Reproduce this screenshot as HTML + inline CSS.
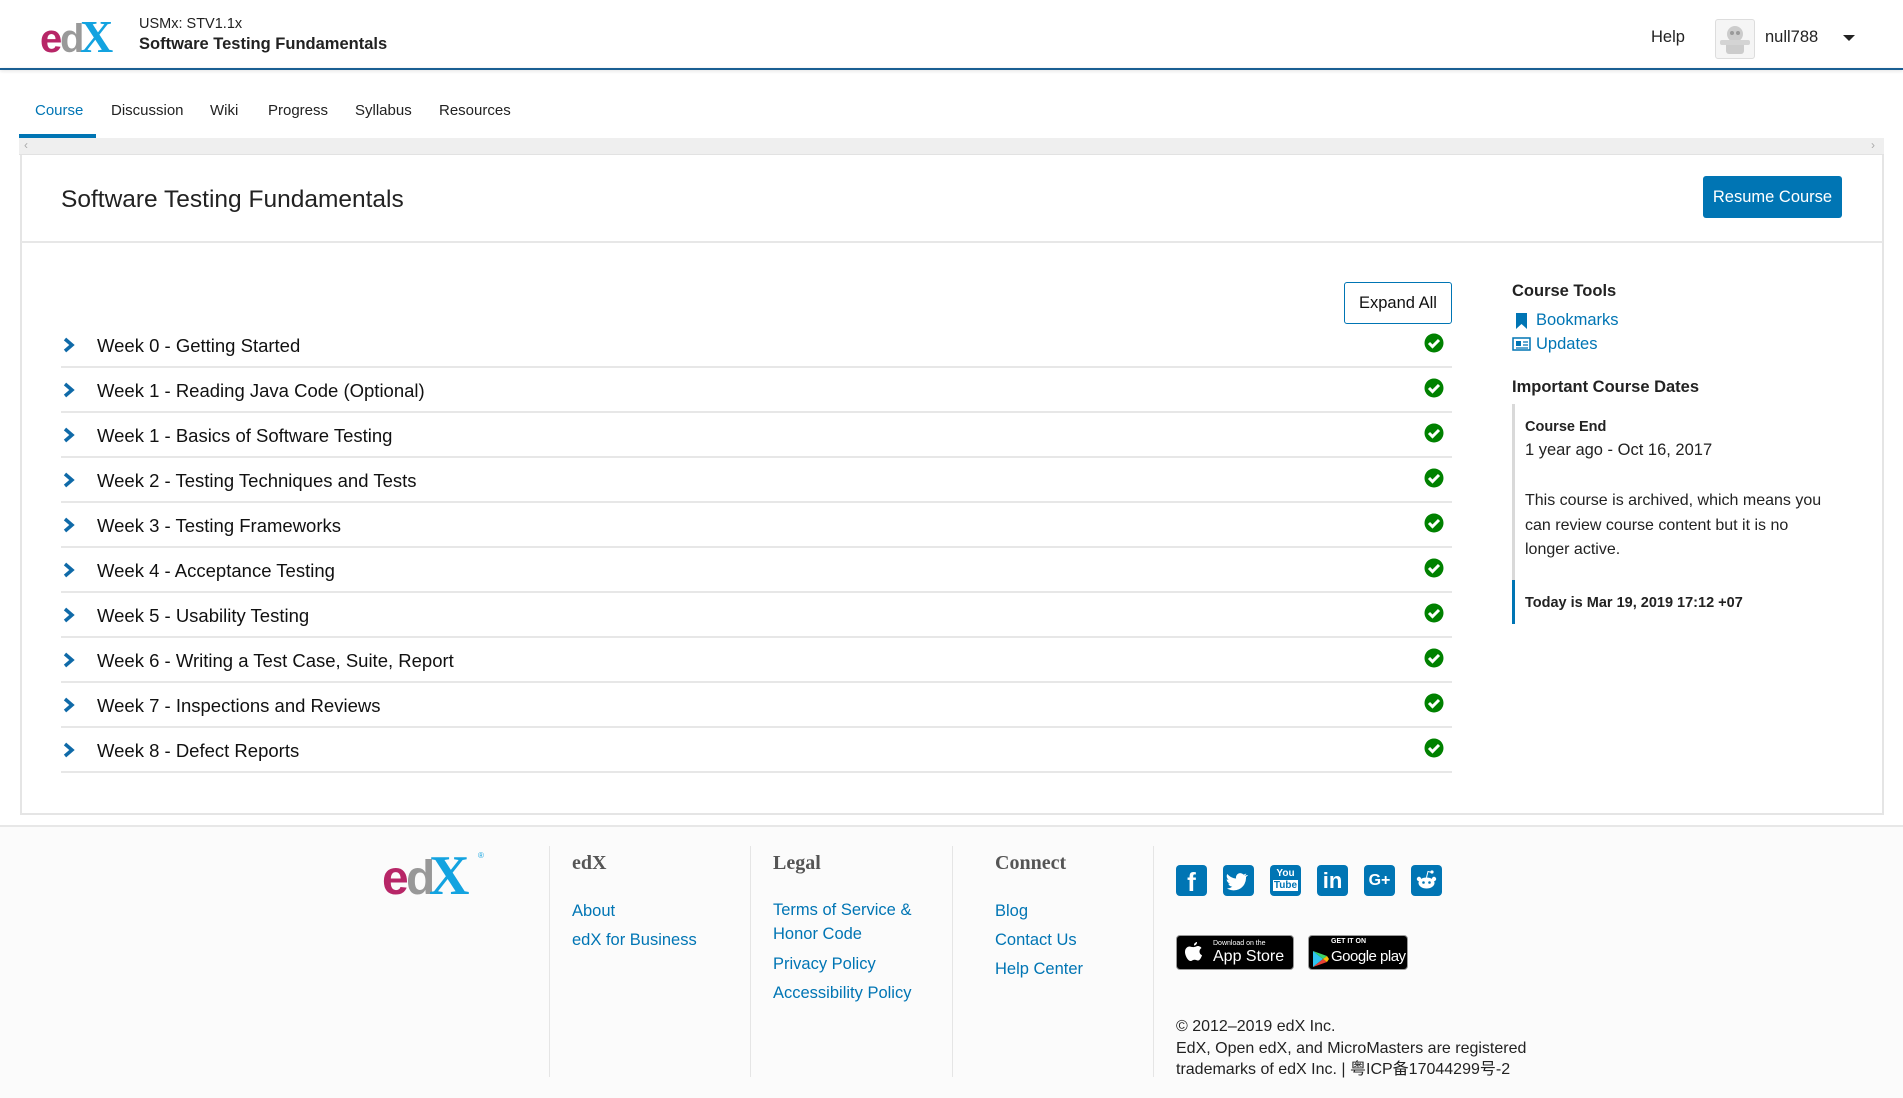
<!DOCTYPE html>
<html><head><meta charset="utf-8"><style>
*{margin:0;padding:0;box-sizing:border-box}
body{width:1903px;height:1098px;overflow:hidden;background:#fff;font-family:"Liberation Sans","Noto Sans CJK SC",sans-serif;color:#313131;position:relative}
.a{position:absolute;white-space:nowrap}
a{color:#0075b4;text-decoration:none}
.row{position:absolute;left:61px;width:1391px;height:45px;border-bottom:2px solid #e7e7e7}
.row .t{position:absolute;left:36px;top:12px;font-size:18.5px;color:#111}
.row .c{position:absolute;left:2px;top:14px}
.row .k{position:absolute;left:1363px;top:10px}
.fh{position:absolute;font-family:"Liberation Serif",serif;font-weight:bold;font-size:20px;color:#555}
.fl{position:absolute;font-size:16.5px;color:#0075b4;line-height:29px}
.vd{position:absolute;top:846px;height:231px;border-left:1px solid #e5e5e5}
.soc{position:absolute;top:865px;width:31px;height:31px;background:#0075b4;border-radius:4px;color:#fff;font-weight:bold;text-align:center}
</style></head><body>
<!-- header -->
<svg class="a" style="left:40px;top:14px" width="80" height="40" viewBox="0 0 80 40">
<text x="0" y="38" font-family="Liberation Sans" font-weight="bold" font-size="40" fill="#b72667">e</text>
<text x="20" y="38" font-family="Liberation Sans" font-weight="bold" font-size="40" fill="#8e8e8e" opacity=".9">d</text>
<text x="40" y="38" font-family="Liberation Serif" font-weight="bold" font-size="46" fill="#13a3e0">X</text>
</svg>
<div class="a" style="left:139px;top:16px;font-size:14.5px;color:#222">USMx: STV1.1x</div>
<div class="a" style="left:139px;top:35px;font-size:16.5px;font-weight:bold;color:#222">Software Testing Fundamentals</div>
<div class="a" style="left:1651px;top:28px;font-size:16.5px;color:#222">Help</div>
<div class="a" style="left:1715px;top:19px;width:40px;height:40px;border:1px solid #ddd;border-radius:3px;background:#f5f5f5">
<svg width="38" height="38" viewBox="0 0 38 38"><circle cx="19" cy="14" r="8" fill="#ccc"/><rect x="10" y="20" width="18" height="14" rx="3" fill="#ccc"/><rect x="4" y="20" width="30" height="5" rx="2" fill="#d4d4d4"/><circle cx="16" cy="13" r="2" fill="#999"/><circle cx="22" cy="13" r="2" fill="#999"/></svg></div>
<div class="a" style="left:1765px;top:28px;font-size:16.5px;color:#222">null788</div>
<div class="a" style="left:1843px;top:35px;width:0;height:0;border-left:6px solid transparent;border-right:6px solid transparent;border-top:6px solid #222"></div>
<div class="a" style="left:0;top:68px;width:1903px;height:2px;background:#1a5f93;box-shadow:0 1px 3px rgba(0,0,0,.15)"></div>
<!-- tabs -->
<div class="a" style="left:35px;top:102px;font-size:15px;color:#0075b4">Course</div>
<div class="a" style="left:111px;top:102px;font-size:15px;color:#222">Discussion</div>
<div class="a" style="left:210px;top:102px;font-size:15px;color:#222">Wiki</div>
<div class="a" style="left:268px;top:102px;font-size:15px;color:#222">Progress</div>
<div class="a" style="left:355px;top:102px;font-size:15px;color:#222">Syllabus</div>
<div class="a" style="left:439px;top:102px;font-size:15px;color:#222">Resources</div>
<div class="a" style="left:19px;top:134px;width:77px;height:4px;background:#0075b4"></div>
<div class="a" style="left:19px;top:138px;width:1865px;height:17px;background:#efefef;border-bottom:1px solid #e2e2e2"></div>
<div class="a" style="left:24px;top:138px;font-size:12px;color:#aaa">‹</div>
<div class="a" style="left:1871px;top:138px;font-size:12px;color:#aaa">›</div>
<!-- card -->
<div class="a" style="left:20px;top:155px;width:1864px;height:660px;border:2px solid #e5e5e5;border-top:none"></div>
<div class="a" style="left:61px;top:186px;font-size:24.5px;color:#222">Software Testing Fundamentals</div>
<div class="a" style="left:1703px;top:176px;width:139px;height:42px;background:#0075b4;border-radius:3px;color:#fff;font-size:16.5px;text-align:center;line-height:42px">Resume Course</div>
<div class="a" style="left:21px;top:241px;width:1862px;height:2px;background:#e7e7e7"></div>
<div class="a" style="left:1344px;top:282px;width:108px;height:42px;border:1px solid #0075b4;border-radius:3px;font-size:16.5px;text-align:center;line-height:40px;color:#111">Expand All</div>

<div class="row" style="top:323px"><svg class="c" width="12" height="16" viewBox="0 0 12 16"><path d="M2 2l7 6-7 6" stroke="#0f6aa8" stroke-width="3.5" fill="none"/></svg><span class="t">Week 0 - Getting Started</span><svg class="k" width="20" height="20" viewBox="0 0 20 20"><circle cx="10" cy="10" r="9.5" fill="#008100"/><path d="M5 10l3.5 3.5L15 7" stroke="#fff" stroke-width="3" fill="none"/></svg></div>
<div class="row" style="top:368px"><svg class="c" width="12" height="16" viewBox="0 0 12 16"><path d="M2 2l7 6-7 6" stroke="#0f6aa8" stroke-width="3.5" fill="none"/></svg><span class="t">Week 1 - Reading Java Code (Optional)</span><svg class="k" width="20" height="20" viewBox="0 0 20 20"><circle cx="10" cy="10" r="9.5" fill="#008100"/><path d="M5 10l3.5 3.5L15 7" stroke="#fff" stroke-width="3" fill="none"/></svg></div>
<div class="row" style="top:413px"><svg class="c" width="12" height="16" viewBox="0 0 12 16"><path d="M2 2l7 6-7 6" stroke="#0f6aa8" stroke-width="3.5" fill="none"/></svg><span class="t">Week 1 - Basics of Software Testing</span><svg class="k" width="20" height="20" viewBox="0 0 20 20"><circle cx="10" cy="10" r="9.5" fill="#008100"/><path d="M5 10l3.5 3.5L15 7" stroke="#fff" stroke-width="3" fill="none"/></svg></div>
<div class="row" style="top:458px"><svg class="c" width="12" height="16" viewBox="0 0 12 16"><path d="M2 2l7 6-7 6" stroke="#0f6aa8" stroke-width="3.5" fill="none"/></svg><span class="t">Week 2 - Testing Techniques and Tests</span><svg class="k" width="20" height="20" viewBox="0 0 20 20"><circle cx="10" cy="10" r="9.5" fill="#008100"/><path d="M5 10l3.5 3.5L15 7" stroke="#fff" stroke-width="3" fill="none"/></svg></div>
<div class="row" style="top:503px"><svg class="c" width="12" height="16" viewBox="0 0 12 16"><path d="M2 2l7 6-7 6" stroke="#0f6aa8" stroke-width="3.5" fill="none"/></svg><span class="t">Week 3 - Testing Frameworks</span><svg class="k" width="20" height="20" viewBox="0 0 20 20"><circle cx="10" cy="10" r="9.5" fill="#008100"/><path d="M5 10l3.5 3.5L15 7" stroke="#fff" stroke-width="3" fill="none"/></svg></div>
<div class="row" style="top:548px"><svg class="c" width="12" height="16" viewBox="0 0 12 16"><path d="M2 2l7 6-7 6" stroke="#0f6aa8" stroke-width="3.5" fill="none"/></svg><span class="t">Week 4 - Acceptance Testing</span><svg class="k" width="20" height="20" viewBox="0 0 20 20"><circle cx="10" cy="10" r="9.5" fill="#008100"/><path d="M5 10l3.5 3.5L15 7" stroke="#fff" stroke-width="3" fill="none"/></svg></div>
<div class="row" style="top:593px"><svg class="c" width="12" height="16" viewBox="0 0 12 16"><path d="M2 2l7 6-7 6" stroke="#0f6aa8" stroke-width="3.5" fill="none"/></svg><span class="t">Week 5 - Usability Testing</span><svg class="k" width="20" height="20" viewBox="0 0 20 20"><circle cx="10" cy="10" r="9.5" fill="#008100"/><path d="M5 10l3.5 3.5L15 7" stroke="#fff" stroke-width="3" fill="none"/></svg></div>
<div class="row" style="top:638px"><svg class="c" width="12" height="16" viewBox="0 0 12 16"><path d="M2 2l7 6-7 6" stroke="#0f6aa8" stroke-width="3.5" fill="none"/></svg><span class="t">Week 6 - Writing a Test Case, Suite, Report</span><svg class="k" width="20" height="20" viewBox="0 0 20 20"><circle cx="10" cy="10" r="9.5" fill="#008100"/><path d="M5 10l3.5 3.5L15 7" stroke="#fff" stroke-width="3" fill="none"/></svg></div>
<div class="row" style="top:683px"><svg class="c" width="12" height="16" viewBox="0 0 12 16"><path d="M2 2l7 6-7 6" stroke="#0f6aa8" stroke-width="3.5" fill="none"/></svg><span class="t">Week 7 - Inspections and Reviews</span><svg class="k" width="20" height="20" viewBox="0 0 20 20"><circle cx="10" cy="10" r="9.5" fill="#008100"/><path d="M5 10l3.5 3.5L15 7" stroke="#fff" stroke-width="3" fill="none"/></svg></div>
<div class="row" style="top:728px"><svg class="c" width="12" height="16" viewBox="0 0 12 16"><path d="M2 2l7 6-7 6" stroke="#0f6aa8" stroke-width="3.5" fill="none"/></svg><span class="t">Week 8 - Defect Reports</span><svg class="k" width="20" height="20" viewBox="0 0 20 20"><circle cx="10" cy="10" r="9.5" fill="#008100"/><path d="M5 10l3.5 3.5L15 7" stroke="#fff" stroke-width="3" fill="none"/></svg></div>

<!-- sidebar -->
<div class="a" style="left:1512px;top:282px;font-size:16.5px;font-weight:bold;color:#222">Course Tools</div>
<svg class="a" style="left:1515px;top:313px" width="13" height="16" viewBox="0 0 13 16"><path d="M1 0h11v16l-5.5-5L1 16z" fill="#0075b4"/></svg>
<div class="a" style="left:1536px;top:311px;font-size:16.5px;color:#0075b4">Bookmarks</div>
<svg class="a" style="left:1512px;top:337px" width="19" height="14" viewBox="0 0 19 14"><rect x="1" y="1" width="17" height="12" fill="none" stroke="#0075b4" stroke-width="1.5"/><rect x="4" y="4" width="5" height="5" fill="#0075b4"/><path d="M11 5h5M11 8h5M4 11h12" stroke="#0075b4" stroke-width="1.2"/></svg>
<div class="a" style="left:1536px;top:335px;font-size:16.5px;color:#0075b4">Updates</div>
<div class="a" style="left:1512px;top:378px;font-size:16.5px;font-weight:bold;color:#222">Important Course Dates</div>
<div class="a" style="left:1512px;top:404px;width:3px;height:176px;background:#d9d9d9"></div>
<div class="a" style="left:1512px;top:580px;width:3px;height:44px;background:#0075b4"></div>
<div class="a" style="left:1525px;top:419px;font-size:14.5px;font-weight:bold;color:#222">Course End</div>
<div class="a" style="left:1525px;top:441px;font-size:16.5px;color:#222">1 year ago - Oct 16, 2017</div>
<div class="a" style="left:1525px;top:489px;font-size:16px;line-height:24.5px;color:#222;white-space:normal;width:300px">This course is archived, which means you can review course content but it is no longer active.</div>
<div class="a" style="left:1525px;top:595px;font-size:14.5px;font-weight:bold;color:#222">Today is Mar 19, 2019 17:12 +07</div>

<!-- footer -->
<div class="a" style="left:0;top:825px;width:1903px;height:273px;background:#fbfbfb;border-top:2px solid #e7e7e7"></div>
<svg class="a" style="left:382px;top:848px" width="106" height="48" viewBox="0 0 106 48">
<text x="0" y="46" font-family="Liberation Sans" font-weight="bold" font-size="48" fill="#b72667">e</text>
<text x="24" y="46" font-family="Liberation Sans" font-weight="bold" font-size="48" fill="#8e8e8e" opacity=".9">d</text>
<text x="47" y="46" font-family="Liberation Serif" font-weight="bold" font-size="56" fill="#13a3e0">X</text>
<text x="96" y="10" font-size="8" fill="#13a3e0">®</text>
</svg>
<div class="vd" style="left:549px"></div><div class="vd" style="left:750px"></div><div class="vd" style="left:952px"></div><div class="vd" style="left:1153px"></div>
<div class="fh" style="left:572px;top:852px">edX</div>
<div class="fh" style="left:773px;top:852px">Legal</div>
<div class="fh" style="left:995px;top:852px">Connect</div>
<div class="fl" style="left:572px;top:897px">About<br>edX for Business</div>
<div class="fl" style="left:773px;top:898px;line-height:24px">Terms of Service &amp;<br>Honor Code</div>
<div class="fl" style="left:773px;top:950px">Privacy Policy<br>Accessibility Policy</div>
<div class="fl" style="left:995px;top:897px">Blog<br>Contact Us<br>Help Center</div>
<div class="soc" style="left:1176px;font-size:26px;line-height:34px;font-family:'Liberation Sans'">f</div>
<div class="soc" style="left:1223px"><svg width="31" height="31" viewBox="0 0 31 31"><path d="M24 10c-1 .5-2 .7-2.5.8.9-.6 1.5-1.4 1.8-2.3-.9.5-1.8.9-2.8 1.1a4.3 4.3 0 0 0-7.4 3.9C9.6 13.3 6.4 11.6 4.3 9c-1.2 2-.5 4.5 1.3 5.7-.7 0-1.4-.2-1.9-.5 0 2.1 1.5 3.9 3.5 4.3-.6.2-1.3.2-1.9.1.5 1.7 2.2 3 4 3A8.7 8.7 0 0 1 4 23.4 12.3 12.3 0 0 0 23 12.5V12c.8-.6 1.5-1.3 2-2z" fill="#fff"/></svg></div>
<div class="soc" style="left:1270px;font-size:10px;line-height:12px;padding-top:3px">You<br><span style="background:#fff;color:#0075b4;padding:0 1px">Tube</span></div>
<div class="soc" style="left:1317px;font-size:22px;line-height:32px">in</div>
<div class="soc" style="left:1364px;font-size:16px;line-height:31px">G+</div>
<div class="soc" style="left:1411px"><svg width="31" height="31" viewBox="0 0 31 31"><ellipse cx="15.5" cy="18" rx="8" ry="5.5" fill="#fff"/><circle cx="8" cy="14" r="2.2" fill="#fff"/><circle cx="23" cy="14" r="2.2" fill="#fff"/><circle cx="21" cy="7" r="1.6" fill="#fff"/><path d="M15.5 12.5l1.5-6 4 1" stroke="#fff" fill="none"/><circle cx="12.5" cy="17.5" r="1.3" fill="#0075b4"/><circle cx="18.5" cy="17.5" r="1.3" fill="#0075b4"/></svg></div>
<div class="a" style="left:1176px;top:935px;width:118px;height:35px;background:#000;border-radius:4px;border:1px solid #999;color:#fff">
<svg style="position:absolute;left:8px;top:6px" width="18" height="22" viewBox="0 0 18 22"><path d="M12 0c.2 1.5-1 3.5-3 3.5C8.8 2 10 .3 12 0zM9 5c1.5 0 2.5-1 4-1 1 0 2.5.5 3.5 2-3 1.8-2.5 6 .5 7.2-.8 2.5-2.3 5.3-4 5.3-1.2 0-1.7-.8-3.5-.8S7 19 5.5 19C3 19 0 13.5 0 10c0-3.5 2.2-5.5 4.5-5.5 1.5 0 3 1 4.5.5z" fill="#fff"/></svg>
<div style="position:absolute;left:36px;top:4px;font-size:7px">Download on the</div>
<div style="position:absolute;left:36px;top:12px;font-size:16px">App Store</div></div>
<div class="a" style="left:1308px;top:935px;width:100px;height:35px;background:#000;border-radius:4px;border:1px solid #999;color:#fff">
<svg style="position:absolute;left:3px;top:14px" width="18" height="18" viewBox="0 0 18 18"><path d="M1 1l10 8-10 8z" fill="#2ec4f0"/><path d="M1 1l10 8 4-3z" fill="#3bd46a"/><path d="M1 17l10-8 4 3z" fill="#ea4335"/><path d="M11 9l4-3 2 3-2 3z" fill="#fbbc04"/></svg>
<div style="position:absolute;left:22px;top:2px;font-size:7px;font-weight:bold">GET IT ON</div>
<div style="position:absolute;left:22px;top:12px;font-size:15px;letter-spacing:-.5px">Google play</div></div>
<div class="a" style="left:1176px;top:1016px;font-size:16px;line-height:21.5px;color:#222">© 2012–2019 edX Inc.<br>EdX, Open edX, and MicroMasters are registered<br>trademarks of edX Inc. | 粤ICP备17044299号-2</div>
</body></html>
